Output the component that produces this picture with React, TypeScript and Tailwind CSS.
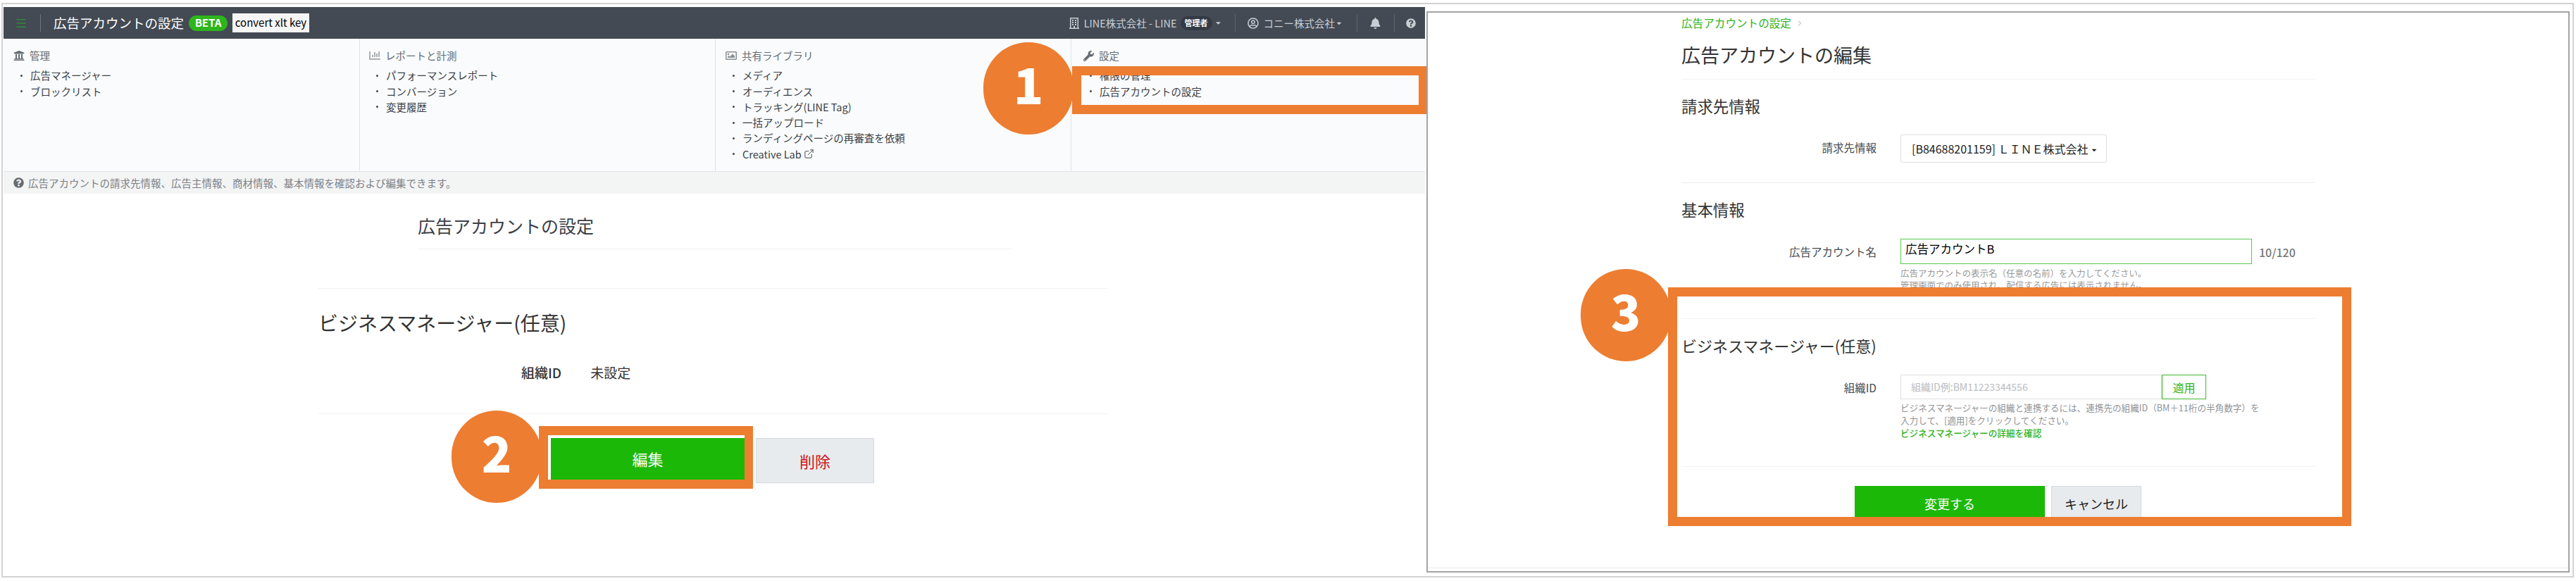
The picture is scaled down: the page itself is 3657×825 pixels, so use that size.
import { ReactNode } from "react";
import {
  FaBell,
  FaCaretDown,
  FaChartBar,
  FaQuestionCircle,
  FaRegBuilding,
  FaRegImage,
  FaRegUserCircle,
  FaUniversity,
  FaWrench,
} from "react-icons/fa";
import { ChevronRight, ExternalLink, Menu } from "lucide-react";

const columns: { icon: ReactNode; title: string; pad: string; items: ReactNode[] }[] = [
  {
    icon: <FaUniversity className="w-[16px] h-[16px]" />,
    title: "管理",
    pad: "pl-[14px]",
    items: ["広告マネージャー", "ブロックリスト"],
  },
  {
    icon: <FaChartBar className="w-[16px] h-[16px] text-[#aab0b5]" />,
    title: "レポートと計測",
    pad: "pl-[13px]",
    items: ["パフォーマンスレポート", "コンバージョン", "変更履歴"],
  },
  {
    icon: <FaRegImage className="w-[16px] h-[16px] text-[#8a9096]" />,
    title: "共有ライブラリ",
    pad: "pl-[14px]",
    items: [
      "メディア",
      "オーディエンス",
      "トラッキング(LINE Tag)",
      "一括アップロード",
      "ランディングページの再審査を依頼",
      <span className="flex items-center gap-[3px]" key="lab">
        Creative Lab <ExternalLink className="w-[15px] h-[15px]" strokeWidth={1.5} />
      </span>,
    ],
  },
  {
    icon: <FaWrench className="w-[15px] h-[15px]" />,
    title: "設定",
    pad: "pl-[16px]",
    items: ["権限の管理", "広告アカウントの設定"],
  },
];

function NavColumn({ col, last }: { col: (typeof columns)[number]; last: boolean }) {
  return (
    <div className={`${col.pad} ${last ? "" : "border-r border-[#dfe3e6]"}`}>
      <div className="mt-[13px] h-[22px] flex items-center gap-[7px] text-[14.5px] text-[#666c72]">
        <span className="w-[16px] flex justify-center">{col.icon}</span>
        {col.title}
      </div>
      <ul className="mt-[6px] pl-[10px]">
        {col.items.map((item, i) => (
          <li key={i} className="h-[22.3px] flex items-center text-[14.5px] text-[#3b4046]">
            <span className="w-[3px] h-[3px] rounded-full bg-[#444] mr-[11px]" />
            {item}
          </li>
        ))}
      </ul>
    </div>
  );
}

function LeftPanel() {
  return (
    <div className="w-[2021px] pt-[4px] pl-[1px] pr-[2px]">
      <header className="h-[45px] bg-[#434a54] flex items-center text-[#c9ced3]">
        <Menu className="ml-[16px] w-[18px] h-[18px] text-[#2e8b3a]" />
        <span className="ml-[18px] mr-[18px] w-px h-[25px] bg-[#6c737c]" />
        <span className="text-[18.5px] text-white leading-none">広告アカウントの設定</span>
        <span className="ml-[7px] h-[22px] w-[55px] rounded-full bg-[#2eb51c] text-white text-[15px] font-bold flex items-center justify-center">
          BETA
        </span>
        <span className="ml-[7px] h-[27px] w-[109px] bg-[#f5f5f5] text-black text-[15px] flex items-center justify-center">
          convert xlt key
        </span>
        <div className="ml-auto flex items-center h-full">
          <FaRegBuilding className="w-[14px] h-[16px]" />
          <span className="ml-[7px] text-[14.5px]">LINE株式会社 - LINE</span>
          <span className="ml-[5px] h-[20px] w-[45px] rounded-full bg-[#333a44] text-white text-[11px] font-bold flex items-center justify-center">
            管理者
          </span>
          <FaCaretDown className="ml-[3px] w-[11px] h-[11px]" />
          <span className="ml-[18px] w-px h-[25px] bg-[#5f666f]" />
          <FaRegUserCircle className="ml-[17px] w-[16px] h-[16px]" />
          <span className="ml-[7px] text-[14.5px]">コニー株式会社</span>
          <FaCaretDown className="ml-[1px] w-[10px] h-[10px]" />
          <span className="ml-[20px] w-px h-[25px] bg-[#5f666f]" />
          <FaBell className="ml-[18px] w-[15px] h-[16px]" />
          <span className="ml-[19px] w-px h-[25px] bg-[#5f666f]" />
          <FaQuestionCircle className="ml-[16px] mr-[13px] w-[14px] h-[16px]" />
        </div>
      </header>

      <nav className="h-[188px] bg-[#f9fbfc] grid grid-cols-[506px_505px_505px_502px]">
        {columns.map((col, i) => (
          <NavColumn key={col.title} col={col} last={i === columns.length - 1} />
        ))}
      </nav>

      <div className="h-[32px] bg-[#f3f4f4] border-t border-[#e3e5e7] flex items-center pl-[14px] gap-[6px] text-[14.5px] text-[#7b8187]">
        <FaQuestionCircle className="w-[15px] h-[15px] text-[#666c72]" />
        広告アカウントの請求先情報、広告主情報、商材情報、基本情報を確認および編集できます。
      </div>

      <div className="ml-[588px] w-[843px] h-[79px] pt-[14px] border-b border-[#f1f2f3] flex items-center text-[25px] text-[#3b4046]">
        広告アカウントの設定
      </div>

      <section className="ml-[447px] mt-[55px] w-[1120px] h-[179px] border-y border-[#f1f2f3] text-[#333]">
        <h2 className="h-[96px] flex items-center text-[28px] font-normal">ビジネスマネージャー(任意)</h2>
        <div className="h-[46px] pl-[288px] flex items-center gap-[41px] text-[19px]">
          <span className="font-medium">組織ID</span>
          <span>未設定</span>
        </div>
      </section>

      <div className="ml-[777px] mt-[34px] flex gap-[16px] items-start">
        <button className="w-[275px] h-[59px] bg-[#1cb807] text-white text-[22px]">編集</button>
        <button className="w-[168px] h-[64px] bg-[#e8ebee] border border-[#d5d8dc] text-[#d0121b] text-[22px]">削除</button>
      </div>
    </div>
  );
}

function FieldRow({ label, children }: { label: string; children: ReactNode }) {
  return (
    <div className="flex items-start">
      <span className="w-[277px] mr-[34px] shrink-0 text-right text-[15.5px] text-[#444a50] leading-[36px]">{label}</span>
      <div>{children}</div>
    </div>
  );
}

function RightPanel() {
  return (
    <div className="mt-[10px] w-[1623px] h-[797px] border-2 border-[#a3a3a3] flex flex-col overflow-hidden">
      <div className="ml-[360px] w-[900px]">
        <div className="h-[30px] flex items-center text-[15.6px] text-[#2eb21e]">
          広告アカウントの設定
          <ChevronRight className="ml-[6px] w-[12px] h-[12px] text-[#888]" strokeWidth={1.5} />
        </div>
        <h1 className="h-[65px] pb-[4px] border-b border-[#f1f2f3] flex items-center text-[27px] font-normal text-[#333]">
          広告アカウントの編集
        </h1>

        <section className="h-[147px] border-b border-[#eceeef]">
          <h2 className="h-[76px] flex items-center text-[22.4px] font-normal text-[#333]">請求先情報</h2>
          <div className="mt-[2px]">
            <FieldRow label="請求先情報">
              <div className="w-[293px] h-[40px] pl-[15px] pr-[12px] border border-[#dcdfe2] rounded-[2px] flex items-center justify-between text-[16px] text-[#222]">
                [B84688201159] ＬＩＮＥ株式会社
                <FaCaretDown className="w-[10px] h-[10px] mt-[3px]" />
              </div>
            </FieldRow>
          </div>
        </section>

        <section className="h-[193px] border-b border-[#f1f2f3]">
          <h2 className="h-[76px] flex items-center text-[22.4px] font-normal text-[#333]">基本情報</h2>
          <div className="mt-[3px]">
            <FieldRow label="広告アカウント名">
              <div className="flex items-center">
                <div className="w-[499px] h-[36px] pl-[6px] pb-[7px] border border-[#5ac84e] flex items-center text-[16.5px] text-black">
                  広告アカウントB
                </div>
                <span className="ml-[10px] mt-[2px] text-[16px] font-medium text-[#777]">10/120</span>
              </div>
              <p className="mt-[4px] text-[12.5px] leading-[17px] text-[#999]">
                広告アカウントの表示名（任意の名前）を入力してください。
                <br />
                管理画面でのみ使用され、配信する広告には表示されません。
              </p>
            </FieldRow>
          </div>
        </section>

        <section className="h-[210px] border-b border-[#f1f2f3]">
          <h2 className="h-[74px] flex items-center text-[22px] font-normal text-[#333]">ビジネスマネージャー(任意)</h2>
          <div className="mt-[5px]">
            <FieldRow label="組織ID">
              <div className="flex">
                <div className="w-[371px] h-[35px] pl-[14px] border border-[#dcdfe2] flex items-center text-[14px] text-[#b9bcc0]">
                  組織ID例:BM11223344556
                </div>
                <button className="w-[63px] h-[35px] border border-[#3fb72f] text-[#2eb21e] text-[16px]">適用</button>
              </div>
              <p className="mt-[3px] w-[520px] text-[12.6px] leading-[18px] text-[#8f9397]">
                ビジネスマネージャーの組織と連携するには、連携先の組織ID（BM＋11桁の半角数字）を
                <br />
                入力して、[適用]をクリックしてください。
              </p>
              <a className="block text-[12.6px] leading-[18px] font-medium text-[#2eb21e]">ビジネスマネージャーの詳細を確認</a>
            </FieldRow>
          </div>
        </section>

        <div className="mt-[27px] ml-[246px] flex gap-[9px]">
          <button className="w-[270px] h-[50px] bg-[#1cb807] text-white text-[18px]">変更する</button>
          <button className="w-[128px] h-[50px] bg-[#e8ebee] border border-[#d5d8dc] text-[#222] text-[18px]">キャンセル</button>
        </div>
      </div>
      <div className="mt-auto mb-[4px] h-px bg-[#e8e8e8]" />
    </div>
  );
}

function StepBadge({ n, className }: { n: number; className: string }) {
  return (
    <div
      className={`absolute w-[128px] h-[131px] rounded-full bg-[#ed7d31] text-white text-[70px] font-black pb-[16px] flex items-center justify-center leading-none ${className}`}
    >
      {n}
    </div>
  );
}

export default function App() {
  return (
    <div className="relative w-[3657px] h-[825px] bg-white overflow-hidden font-['Noto_Sans_CJK_JP','Noto_Sans',sans-serif]">
      <div className="ml-[2px] mt-[4px] w-[3652px] h-[816px] border-2 border-[#d2d2d2] flex">
        <LeftPanel />
        <RightPanel />
      </div>

      {/* callouts on top of the screenshots */}
      <div className="absolute left-[1522px] top-[94px] w-[503px] h-[68px] border-[13px] border-r-[11px] border-[#ed7d31]" />
      <div className="absolute left-[765px] top-[605px] w-[304px] h-[89px] border-[13px] border-r-[12px] border-[#ed7d31]" />
      <div className="absolute left-[2368px] top-[408px] w-[970px] h-[339px] border-[13px] border-[#ed7d31]" />
      <StepBadge n={1} className="left-[1396px] top-[60px]" />
      <StepBadge n={2} className="left-[641px] top-[583px]" />
      <StepBadge n={3} className="left-[2244px] top-[382px]" />
    </div>
  );
}
